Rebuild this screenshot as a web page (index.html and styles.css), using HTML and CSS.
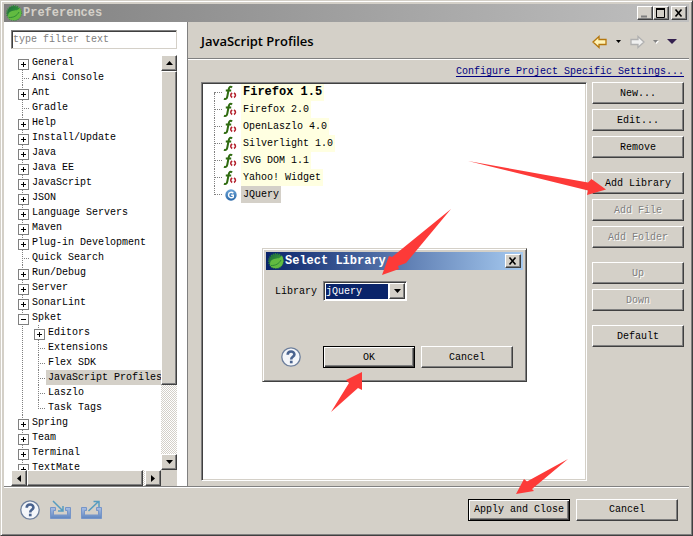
FILE: index.html
```
<!DOCTYPE html>
<html lang="en">
  <head>
    <meta charset="UTF-8" />
    <meta name="viewport" content="width=device-width, initial-scale=1.0" />
    <title>Preferences</title>
    <link rel="stylesheet" href="styles.css">
  </head>
  <body>
    <!-- shared icons -->
    <svg class="defs" width="0" height="0" aria-hidden="true">
      <defs>
        <linearGradient id="leaf-bg" x1="0" y1="0" x2="1" y2="1">
          <stop offset="0" stop-color="#1f6a3a" />
          <stop offset="1" stop-color="#3fae3c" />
        </linearGradient>
        <linearGradient id="tray-bg" x1="0" y1="0" x2="0" y2="1">
          <stop offset="0" stop-color="#a9bfe4" />
          <stop offset="1" stop-color="#5f86c0" />
        </linearGradient>
        <linearGradient id="blue-ball" x1="0" y1="0" x2="0" y2="1">
          <stop offset="0" stop-color="#6ba3d6" />
          <stop offset="1" stop-color="#2a68a8" />
        </linearGradient>
        <symbol id="spring" viewBox="0 0 16 16">
          <circle cx="8" cy="8" r="7" fill="url(#leaf-bg)" />
          <circle cx="8" cy="8" r="7.3" fill="none" stroke="#2f8d36" stroke-width="1.2" stroke-dasharray="1.2 1" />
          <path d="M14 2.500c2.300 4.500 1.500 9.500-2 11.500-3 1.800-7 1.600-9.500-.8-1.300-3.200.2-6.300 3.500-7.200 3.500-.9 6.200-.2 8-3.500z" fill="#62bb40" />
          <path d="M3 12.500c4.500.2 8-1.700 10-5.500" fill="none" stroke="#2e8b35" stroke-width="1" />
        </symbol>
        <symbol id="help" viewBox="0 0 20 20">
          <circle cx="10" cy="10" r="9.2" fill="#f4f6fa" stroke="#6d7f9c" stroke-width="1.3" />
          <path d="M6.700 7.800c0-4.300 6.700-4.200 6.700-.4 0 2.400-3.200 2.400-3.200 5" fill="none" stroke="#4a638f" stroke-width="2.600" />
          <rect x="8.900" y="13.700" width="2.700" height="2.600" fill="#4a638f" />
        </symbol>
        <symbol id="fn" viewBox="0 0 16 16">
          <path d="M9 2.500C7.700.9 6.200 1.800 5.700 4.300L4.300 11.500c-.4 2.300-1.600 3-3.300 2.100M2.800 5.500h5.400" fill="none" stroke="#2f6b10" stroke-width="2" />
          <path d="M9.200 8C7.200 9.300 7.200 11.200 9.200 12.500M11 8c2 1.300 2 3.200 0 4.500" fill="none" stroke="#b3202c" stroke-width="1.500" />
        </symbol>
        <symbol id="group" viewBox="0 0 12 12">
          <circle cx="6" cy="6" r="5.700" fill="url(#blue-ball)" />
          <path d="M8.300 4.300C7 2.700 3.500 3 3.500 6s3.500 3.300 4.800 2V6.300H6.200" fill="none" stroke="#fff" stroke-width="1.400" />
        </symbol>
        <symbol id="tray" viewBox="0 0 21 20">
          <path d="M.5 7.500h5v3h-2v4.500h14v-4.500h-2v-3h5v11H.5z" fill="url(#tray-bg)" stroke="#7695c8" stroke-width="1" />
        </symbol>
      </defs>
    </svg>

    <div class="window">
      <div class="titlebar">
        <svg class="logo"><use href="#spring" /></svg>
        <h1>Preferences</h1>
        <div class="win-buttons">
          <button class="win-btn" aria-label="Minimize"><svg width="10" height="10"><path d="M1 8.500h6" stroke="#808080" stroke-width="2" /></svg></button>
          <button class="win-btn" aria-label="Maximize"><svg width="10" height="10"><path d="M.5 1v8.500h8V1" fill="none" stroke="#000" stroke-width="1" /><path d="M0 1h9" stroke="#000" stroke-width="2" /></svg></button>
          <button class="win-btn close" aria-label="Close"><svg width="10" height="10"><path d="M1.500 1.500l6 7M7.500 1.500l-6 7" stroke="#000" stroke-width="1.600" /></svg></button>
        </div>
      </div>

      <div class="main">
        <div class="sidebar">
          <input class="filter" type="text" placeholder="type filter text" aria-label="type filter text" />
          <div class="tree-box">
            <ul class="tree">
              <li class="plus">General</li>
              <li>Ansi Console</li>
              <li class="plus">Ant</li>
              <li>Gradle</li>
              <li class="plus">Help</li>
              <li class="plus">Install/Update</li>
              <li class="plus">Java</li>
              <li class="plus">Java EE</li>
              <li class="plus">JavaScript</li>
              <li class="plus">JSON</li>
              <li class="plus">Language Servers</li>
              <li class="plus">Maven</li>
              <li class="plus">Plug-in Development</li>
              <li>Quick Search</li>
              <li class="plus">Run/Debug</li>
              <li class="plus">Server</li>
              <li class="plus">SonarLint</li>
              <li class="minus">Spket
                <ul>
                  <li class="plus">Editors</li>
                  <li>Extensions</li>
                  <li>Flex SDK</li>
                  <li><span class="selected">JavaScript Profiles</span></li>
                  <li>Laszlo</li>
                  <li>Task Tags</li>
                </ul>
              </li>
              <li class="plus">Spring</li>
              <li class="plus">Team</li>
              <li class="plus">Terminal</li>
              <li class="plus">TextMate</li>
            </ul>
            <div class="vscroll">
              <button class="scroll-btn" aria-label="Scroll up"><svg width="7" height="4"><path d="M3.500 0L7 4H0z" /></svg></button>
              <div class="thumb"></div>
              <div class="track"></div>
              <button class="scroll-btn" aria-label="Scroll down"><svg width="7" height="4"><path d="M0 0h7L3.500 4z" /></svg></button>
            </div>
            <div class="hscroll">
              <button class="scroll-btn" aria-label="Scroll left"><svg width="4" height="7"><path d="M4 0v7L0 3.500z" /></svg></button>
              <div class="thumb"></div>
              <div class="track"></div>
              <button class="scroll-btn" aria-label="Scroll right"><svg width="4" height="7"><path d="M0 0l4 3.500L0 7z" /></svg></button>
            </div>
          </div>
        </div>

        <div class="content">
          <div class="page-header">
            <h2>JavaScript Profiles</h2>
            <div class="nav">
              <button aria-label="Back"><svg width="16" height="14"><path d="M1 7l6-5.500V4.500h7v5H7v3z" fill="#fff3b8" stroke="#b5770d" stroke-width="1.300" /></svg></button>
              <button aria-label="Back history"><svg width="5" height="3"><path d="M0 0h5L2.500 3z" /></svg></button>
              <button aria-label="Forward"><svg width="16" height="14"><path d="M15 7L9 1.500V4.500H2v5h7v3z" fill="#f0f0f0" stroke="#b0b0b0" stroke-width="1.300" /></svg></button>
              <button aria-label="Forward history"><svg width="6" height="4"><path d="M1 1h5L3.500 4z" fill="#fff" /><path d="M0 0h5L2.500 3z" fill="#808080" /></svg></button>
              <button aria-label="Menu"><svg width="10" height="5"><path d="M0 0h10L5 5z" fill="#34204f" /></svg></button>
            </div>
          </div>

          <div class="page-body">
            <a class="config-link" href="#">Configure Project Specific Settings...</a>
            <div class="columns">
              <ul class="profiles">
                <li><svg><use href="#fn" /></svg><b>Firefox 1.5</b></li>
                <li><svg><use href="#fn" /></svg><span>Firefox 2.0</span></li>
                <li><svg><use href="#fn" /></svg><span>OpenLaszlo 4.0</span></li>
                <li><svg><use href="#fn" /></svg><span>Silverlight 1.0</span></li>
                <li><svg><use href="#fn" /></svg><span>SVG DOM 1.1</span></li>
                <li><svg><use href="#fn" /></svg><span>Yahoo! Widget</span></li>
                <li><svg class="ball"><use href="#group" /></svg><span class="selected">JQuery</span></li>
              </ul>
              <div class="actions">
                <div class="group">
                  <button class="btn">New...</button>
                  <button class="btn">Edit...</button>
                  <button class="btn">Remove</button>
                </div>
                <div class="group">
                  <button class="btn">Add Library</button>
                  <button class="btn" disabled>Add File</button>
                  <button class="btn" disabled>Add Folder</button>
                </div>
                <div class="group">
                  <button class="btn" disabled>Up</button>
                  <button class="btn" disabled>Down</button>
                </div>
                <div class="group">
                  <button class="btn">Default</button>
                </div>
              </div>
            </div>
          </div>
        </div>
      </div>

      <div class="footer">
        <button class="icon-btn" aria-label="Help"><svg width="20" height="20"><use href="#help" /></svg></button>
        <button class="icon-btn" aria-label="Import"><svg width="21" height="20"><use href="#tray" /><path d="M3 1l9.500 9.500M13 6v5H8" fill="none" stroke="#559cc0" stroke-width="1.500" /></svg></button>
        <button class="icon-btn" aria-label="Export"><svg width="21" height="20"><use href="#tray" /><path d="M7.500 11L17 2M12.500 1.500H18V7" fill="none" stroke="#559cc0" stroke-width="1.500" /></svg></button>
        <div class="footer-buttons">
          <button class="btn default">Apply and Close</button>
          <button class="btn">Cancel</button>
        </div>
      </div>
    </div>

    <div class="dialog" role="dialog" aria-labelledby="dialog-title">
      <div class="titlebar">
        <svg class="logo"><use href="#spring" /></svg>
        <h1 id="dialog-title">Select Library</h1>
        <button class="win-btn close" aria-label="Close"><svg width="10" height="10"><path d="M1.500 1.500l6 7M7.500 1.500l-6 7" stroke="#000" stroke-width="1.600" /></svg></button>
      </div>
      <div class="field">
        <label for="library">Library</label>
        <div class="combo">
          <select id="library">
            <option>jQuery</option>
          </select>
          <span class="combo-arrow"><svg width="7" height="4"><path d="M0 0h7L3.500 4z" /></svg></span>
        </div>
      </div>
      <div class="dialog-footer">
        <button class="icon-btn" aria-label="Help"><svg width="20" height="20"><use href="#help" /></svg></button>
        <button class="btn default">OK</button>
        <button class="btn">Cancel</button>
      </div>
    </div>

    <!-- red pointers over the window -->
    <svg class="arrows" width="693" height="536" viewBox="0 0 693 536" fill="#fd3a38" aria-hidden="true">
      <path d="M468 161L588 182.500 591.500 179 606 189.500 587 195 588 190.500z" />
      <path d="M451 209L392 257 389 256 382 275 399 269 398 266 406 263z" />
      <path d="M331 412L349 383 346 380 362 372 362 390 358 388z" />
      <path d="M568 459L527 481.500 524 479 516 494 534 491 532 489z" />
    </svg>
  </body>
</html>
```
FILE: styles.css
```
* {
  box-sizing: border-box;
}
body {
  margin: 0;
  position: relative;
  font-family: "Liberation Mono", monospace;
  font-size: 10px;
  line-height: 15px;
  color: #000000;
}
.defs {
  position: absolute;
}
ul {
  list-style: none;
  margin: 0;
  padding: 0;
}
h1,
h2 {
  margin: 0;
}
button {
  font: inherit;
  color: inherit;
  padding: 0;
  border: none;
  background: none;
}
svg {
  display: block;
}

/* window frames */
.window,
.dialog {
  display: flex;
  flex-direction: column;
  background: #d4d0c8;
  border: 1px solid;
  border-color: #d4d0c8 #404040 #404040 #d4d0c8;
  box-shadow: inset 1px 1px #ffffff, inset -1px -1px #808080;
  padding: 3px;
}
.window {
  height: 100vh;
}
.titlebar {
  flex: none;
  display: flex;
  align-items: center;
  height: 18px;
  padding: 0 2px;
  background: linear-gradient(to right, #808080, #c0c0c0);
  color: #d4d0c8;
}
.titlebar h1 {
  flex: 1;
  margin-left: 1px;
  font-size: 12px;
  line-height: 18px;
}
.logo {
  width: 16px;
  height: 16px;
}
.win-buttons {
  display: flex;
}
.win-btn,
.scroll-btn {
  display: flex;
  align-items: center;
  justify-content: center;
  width: 16px;
  height: 14px;
  background: #d4d0c8;
  border: 1px solid;
  border-color: #ffffff #404040 #404040 #ffffff;
  box-shadow: inset -1px -1px #808080;
}
.win-buttons .close {
  margin-left: 2px;
}

/* left side */
.main {
  flex: 1;
  min-height: 0;
  display: flex;
}
.sidebar {
  flex: none;
  width: 184px;
  display: flex;
  flex-direction: column;
  padding: 8px 10px 0 7px;
  background: #ffffff;
  border-right: 1px solid #808080;
}
.filter {
  width: 166px;
  height: 19px;
  margin: 0 0 6px;
  padding: 0 1px;
  font: inherit;
  border: 1px solid;
  border-color: #808080 #d4d0c8 #d4d0c8 #808080;
  box-shadow: inset 1px 1px #404040;
}
.filter::placeholder {
  color: #808080;
}
.tree-box {
  flex: 1;
  min-height: 0;
  display: grid;
  grid-template-columns: 1fr 16px;
  grid-template-rows: 1fr 16px;
  background: #d4d0c8;
}
.tree {
  min-width: 0;
  overflow: hidden;
  padding-left: 4px;
  background: #ffffff;
  white-space: nowrap;
}
.tree li {
  position: relative;
  padding-left: 17px;
}
.tree ul {
  margin-left: -1px;
}
/* dotted connector lines */
.tree li::before {
  content: "";
  position: absolute;
  top: 0;
  bottom: 0;
  left: 7px;
  border-left: 1px dotted #808080;
}
.tree > li:first-child::before {
  top: 8px;
}
.tree ul li:last-child::before {
  bottom: 6px;
}
.tree li::after {
  content: "";
  position: absolute;
  top: 8px;
  left: 7px;
  width: 7px;
  border-top: 1px dotted #808080;
}
.tree li.plus::after,
.tree li.minus::after {
  top: 4px;
  left: 3px;
  width: 9px;
  height: 9px;
  border: 1px solid #808080;
  background: linear-gradient(#000000, #000000) center / 5px 1px no-repeat #ffffff;
}
.tree li.plus::after {
  background: linear-gradient(#000000, #000000) center / 5px 1px no-repeat,
    linear-gradient(#000000, #000000) center / 1px 5px no-repeat #ffffff;
}
.selected {
  background: #d4d0c8;
}
.tree .selected {
  display: block;
  margin-left: -2px;
  padding-left: 2px;
}
.vscroll {
  display: flex;
  flex-direction: column;
}
.hscroll {
  display: flex;
}
.scroll-btn {
  flex: none;
  height: 16px;
}
.thumb {
  flex: 314 1 0;
  background: #d4d0c8;
  border: 1px solid;
  border-color: #ffffff #404040 #404040 #ffffff;
  box-shadow: inset -1px -1px #808080;
}
.track {
  flex: 70 1 0;
  background: repeating-conic-gradient(#ffffff 0 25%, #d4d0c8 0 50%) 0 0 / 2px 2px;
}
.hscroll .track {
  flex: 5 1 0;
}

/* right side */
.content {
  flex: 1;
  min-width: 0;
  display: flex;
  flex-direction: column;
}
.page-header {
  display: flex;
  align-items: center;
  justify-content: space-between;
  height: 37px;
  padding: 3px 12px 0 13px;
  border-bottom: 1px solid #808080;
  box-shadow: 0 1px #ffffff;
}
h2 {
  font-family: "Open Sans", sans-serif;
  font-size: 13px;
  font-weight: 600;
}
.nav {
  display: flex;
  align-items: center;
  gap: 8px;
}
.page-body {
  flex: 1;
  min-height: 0;
  display: flex;
  flex-direction: column;
  padding: 5px 5px 5px 13px;
}
.config-link {
  align-self: flex-end;
  height: 18px;
  color: #000080;
  text-underline-offset: 2px;
}
.columns {
  flex: 1;
  min-height: 0;
  display: flex;
  gap: 5px;
}
.profiles {
  flex: 1;
  border: 1px solid;
  border-color: #808080 #ffffff #ffffff #808080;
  box-shadow: inset 1px 1px #404040, inset -1px -1px #d4d0c8;
  padding: 1px 0 0 11px;
  background: #ffffff;
}
.profiles li {
  position: relative;
  display: flex;
  align-items: center;
  height: 17px;
  padding-left: 10px;
  line-height: 17px;
}
.profiles li::before {
  content: "";
  position: absolute;
  top: 0;
  bottom: 0;
  left: 1px;
  border-left: 1px dotted #808080;
}
.profiles li:first-child::before {
  top: 9px;
}
.profiles li:last-child::before {
  bottom: 8px;
}
.profiles li::after {
  content: "";
  position: absolute;
  top: 8px;
  left: 1px;
  width: 8px;
  border-top: 1px dotted #808080;
}
.profiles svg {
  width: 16px;
  height: 16px;
  margin-right: 2px;
}
.profiles .ball {
  padding: 2px;
}
.profiles span,
.profiles b {
  padding: 0 2px;
  background: #ffffe1;
}
.profiles b {
  font-size: 12px;
}
.profiles .selected {
  background: #d4d0c8;
}
.actions {
  flex: none;
  width: 92px;
  display: flex;
  flex-direction: column;
  gap: 14px;
}
.group {
  display: flex;
  flex-direction: column;
  gap: 5px;
}
.btn {
  height: 22px;
  background: #d4d0c8;
  border: 1px solid;
  border-color: #ffffff #404040 #404040 #ffffff;
  box-shadow: inset -1px -1px #808080;
}
.btn:disabled {
  color: #808080;
  text-shadow: 1px 1px #ffffff;
}
.btn.default {
  border-color: #000000;
  box-shadow: inset 1px 1px #ffffff, inset -1px -1px #404040, inset -2px -2px #808080;
}

/* bottom bar */
.footer {
  flex: none;
  display: flex;
  align-items: center;
  gap: 10px;
  height: 46px;
  padding: 0 11px 0 16px;
  border-top: 1px solid #808080;
  box-shadow: inset 0 1px #ffffff;
}
.footer-buttons {
  flex: 1;
  display: flex;
  justify-content: flex-end;
  gap: 6px;
}
.footer .btn {
  width: 102px;
}

/* select library dialog */
.dialog {
  position: absolute;
  left: 262px;
  top: 248px;
  width: 265px;
}
.dialog .titlebar {
  background: linear-gradient(to right, #0a246a, #a6caf0);
  color: #ffffff;
}
.field {
  display: flex;
  align-items: center;
  gap: 6px;
  padding: 11px 9px 45px;
}
.combo {
  position: relative;
  width: 84px;
  height: 20px;
  padding: 2px;
  border: 1px solid;
  border-color: #808080 #ffffff #ffffff #808080;
  box-shadow: inset 1px 1px #404040;
  background: #ffffff;
}
.combo select {
  display: block;
  appearance: none;
  width: 62px;
  height: 15px;
  padding: 0;
  border: none;
  border-radius: 0;
  background: #0a246a;
  color: #ffffff;
  font: inherit;
}
.combo-arrow {
  position: absolute;
  top: 1px;
  right: 1px;
  display: flex;
  align-items: center;
  justify-content: center;
  width: 16px;
  height: 16px;
  background: #d4d0c8;
  border: 1px solid;
  border-color: #ffffff #404040 #404040 #ffffff;
  box-shadow: inset -1px -1px #808080;
  pointer-events: none;
}
.dialog-footer {
  display: flex;
  gap: 6px;
  padding: 0 10px 10px 15px;
}
.dialog-footer .icon-btn {
  margin-right: 16px;
}
.dialog-footer .btn {
  width: 92px;
}
.arrows {
  position: absolute;
  left: 0;
  top: 0;
  pointer-events: none;
}
```
